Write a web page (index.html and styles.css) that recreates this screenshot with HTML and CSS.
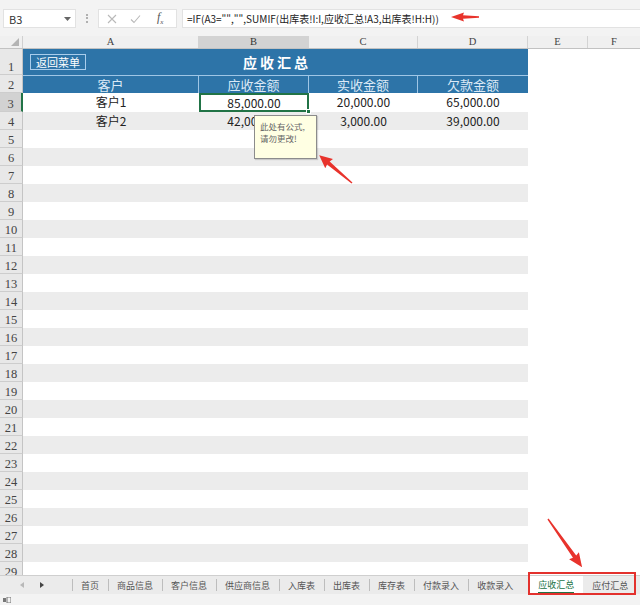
FILE: index.html
```html
<!DOCTYPE html>
<html lang="zh-CN">
<head>
<meta charset="utf-8">
<title>应收汇总</title>
<link rel="stylesheet" href="styles.css">
</head>
<body>
<div class="app">
  <div class="fbar">
    <div class="namebox"><span>B3</span><svg class="dd" width="7" height="4" viewBox="0 0 7 4"><path d="M0 0h7L3.5 4z" fill="#666"/></svg></div>
    <div class="vdots"></div>
    <div class="fxbox">
      <svg class="ic-x" width="10" height="10" viewBox="0 0 10 10"><path d="M1 1l8 8M9 1l-8 8" stroke="#b9b9b9" stroke-width="1.1"/></svg>
      <svg class="ic-ok" width="11" height="10" viewBox="0 0 11 10"><path d="M1 5.5l3 3 6-7" stroke="#b9b9b9" stroke-width="1.1" fill="none"/></svg>
      <span class="fx">f<sub>x</sub></span>
    </div>
    <div class="formula">=IF(A3="","",SUMIF(出库表!I:I,应收汇总!A3,出库表!H:H))</div>
  </div>

  <div class="sheet">
    <div class="colhdr">
      <div class="corner"><svg width="8" height="8" viewBox="0 0 8 8"><path d="M8 0V8H0z" fill="#b4b4b4"/></svg></div>
      <div class="ch ca">A</div>
      <div class="ch cb sel">B</div>
      <div class="ch cc">C</div>
      <div class="ch cd">D</div>
      <div class="ch ce">E</div>
      <div class="ch cf">F</div>
    </div>

    <div class="row r1">
      <div class="rh">1</div>
      <div class="titlebar">
        <span class="btn">返回菜单</span>
        <span class="title">应收汇总</span>
        <span></span>
      </div>
      <div class="rest"></div>
    </div>

    <div class="row r2">
      <div class="rh">2</div>
      <div class="hc ca">客户</div>
      <div class="hc cb">应收金额</div>
      <div class="hc cc">实收金额</div>
      <div class="hc cd last">欠款金额</div>
      <div class="rest"></div>
    </div>

    <div class="row r3">
      <div class="rh selrow">3</div>
      <div class="c ca">客户1</div>
      <div class="c cb active">85,000.00<span class="handle"></span></div>
      <div class="c cc">20,000.00</div>
      <div class="c cd">65,000.00</div>
      <div class="rest"></div>
    </div>

    <div class="row even">
      <div class="rh">4</div>
      <div class="c ca">客户2</div>
      <div class="c cb">42,000.00</div>
      <div class="c cc">3,000.00</div>
      <div class="c cd">39,000.00</div>
      <div class="rest"></div>
    </div>

    <div class="row"><div class="rh">5</div><div class="band"></div><div class="rest"></div></div>
    <div class="row even"><div class="rh">6</div><div class="band"></div><div class="rest"></div></div>
    <div class="row"><div class="rh">7</div><div class="band"></div><div class="rest"></div></div>
    <div class="row even"><div class="rh">8</div><div class="band"></div><div class="rest"></div></div>
    <div class="row"><div class="rh">9</div><div class="band"></div><div class="rest"></div></div>
    <div class="row even"><div class="rh">10</div><div class="band"></div><div class="rest"></div></div>
    <div class="row"><div class="rh">11</div><div class="band"></div><div class="rest"></div></div>
    <div class="row even"><div class="rh">12</div><div class="band"></div><div class="rest"></div></div>
    <div class="row"><div class="rh">13</div><div class="band"></div><div class="rest"></div></div>
    <div class="row even"><div class="rh">14</div><div class="band"></div><div class="rest"></div></div>
    <div class="row"><div class="rh">15</div><div class="band"></div><div class="rest"></div></div>
    <div class="row even"><div class="rh">16</div><div class="band"></div><div class="rest"></div></div>
    <div class="row"><div class="rh">17</div><div class="band"></div><div class="rest"></div></div>
    <div class="row even"><div class="rh">18</div><div class="band"></div><div class="rest"></div></div>
    <div class="row"><div class="rh">19</div><div class="band"></div><div class="rest"></div></div>
    <div class="row even"><div class="rh">20</div><div class="band"></div><div class="rest"></div></div>
    <div class="row"><div class="rh">21</div><div class="band"></div><div class="rest"></div></div>
    <div class="row even"><div class="rh">22</div><div class="band"></div><div class="rest"></div></div>
    <div class="row"><div class="rh">23</div><div class="band"></div><div class="rest"></div></div>
    <div class="row even"><div class="rh">24</div><div class="band"></div><div class="rest"></div></div>
    <div class="row"><div class="rh">25</div><div class="band"></div><div class="rest"></div></div>
    <div class="row even"><div class="rh">26</div><div class="band"></div><div class="rest"></div></div>
    <div class="row"><div class="rh">27</div><div class="band"></div><div class="rest"></div></div>
    <div class="row even"><div class="rh">28</div><div class="band"></div><div class="rest"></div></div>
    <div class="row"><div class="rh">29</div><div class="band"></div><div class="rest"></div></div>
  </div>

  <div class="tabs">
    <div class="nav">
      <svg width="4" height="6" viewBox="0 0 4 6"><path d="M4 0V6L0 3z" fill="#b8b8b8"/></svg>
      <svg width="4" height="6" viewBox="0 0 4 6"><path d="M0 0V6L4 3z" fill="#444"/></svg>
    </div>
    <div class="tab">首页</div>
    <div class="tab">商品信息</div>
    <div class="tab">客户信息</div>
    <div class="tab">供应商信息</div>
    <div class="tab">入库表</div>
    <div class="tab">出库表</div>
    <div class="tab">库存表</div>
    <div class="tab">付款录入</div>
    <div class="tab">收款录入</div>
    <div class="tab current"><span>应收汇总</span></div>
    <div class="tab nosep">应付汇总</div>
  </div>
  <div class="status">
    <svg width="8" height="6" viewBox="0 0 8 6"><rect x="0" y="1" width="3" height="4" fill="#777"/><rect x="4" y="0" width="4" height="6" fill="none" stroke="#777" stroke-width="1"/></svg>
  </div>

  <div class="tip">此处有公式,<br>请勿更改!</div>
  <div class="redbox"></div>
  <svg class="arrows" width="640" height="605" viewBox="0 0 640 605">
    <g fill="#e8332c">
      <polygon transform="translate(479,17) rotate(180)" points="0,-0.7 16,-1.7 15,-4.5 28,0 15,4.5 16,1.7 0,0.7"/>
      <polygon transform="translate(352,183) rotate(220.3)" points="0,-0.7 31,-2 30,-6 43,0 30,6 31,2 0,0.7"/>
      <polygon transform="translate(548,519) rotate(54.7)" points="0,-0.7 46,-2 45,-6 59,0 45,6 46,2 0,0.7"/>
    </g>
  </svg>
</div>
</body>
</html>
```

FILE: styles.css
```css
* { box-sizing: border-box; margin: 0; padding: 0; }
body { margin: 0; background: #fff; }

.app {
  position: relative;
  width: 640px;
  height: 605px;
  overflow: hidden;
  display: flex;
  flex-direction: column;
  background: #fff;
  font-family: "Noto Sans CJK SC", "Noto Sans", sans-serif;
  color: #222;
}

/* formula bar */
.fbar {
  height: 36px;
  flex: none;
  display: flex;
  align-items: flex-start;
  padding: 9px 0 0 3px;
  background: #f3f3f3;
}
.namebox {
  width: 73px;
  height: 19px;
  background: #fff;
  border: 1px solid #e2e2e2;
  display: flex;
  align-items: center;
  justify-content: space-between;
  padding: 0 4px 0 5px;
  font-size: 11px;
  color: #333;
}
.vdots {
  width: 2px;
  height: 9px;
  margin: 5px 10px 0 10px;
  border-left: 2px dotted #b0b0b0;
}
.fxbox {
  width: 79px;
  height: 19px;
  background: #fff;
  border: 1px solid #e2e2e2;
  display: flex;
  align-items: center;
}
.ic-x { margin-left: 8px; }
.ic-ok { margin-left: 13px; }
.fx {
  margin-left: 16px;
  font-family: "Liberation Serif", serif;
  font-style: italic;
  font-size: 12px;
  color: #555;
  line-height: 1;
}
.fx sub { font-size: 7px; }
.formula {
  flex: 1;
  height: 19px;
  margin-left: 5px;
  background: #fff;
  border: 1px solid #e2e2e2;
  border-right: none;
  padding-left: 4px;
  font-size: 10px;
  line-height: 17px;
  color: #222;
  white-space: nowrap;
}

/* sheet */
.sheet {
  flex: 1;
  overflow: hidden;
  display: flex;
  flex-direction: column;
}
.colhdr {
  height: 13px;
  flex: none;
  display: flex;
  background: #f0f0f0;
  border-bottom: 1px solid #c2c2c2;
}
.corner {
  width: 23px;
  flex: none;
  display: flex;
  justify-content: flex-end;
  align-items: flex-end;
  padding: 0 3px 2px 0;
  border-right: 1px solid #d0d0d0;
}
.ch {
  flex: none;
  font-family: "Liberation Serif", serif;
  font-size: 10.5px;
  line-height: 12px;
  color: #444;
  text-align: center;
  border-right: 1px solid #d3d3d3;
}
.ch.sel { background: #d3d3d3; color: #333; }
.ca { width: 176px; flex: none; }
.cb { width: 110px; flex: none; }
.cc { width: 109px; flex: none; }
.cd { width: 110px; flex: none; }
.ce { width: 60px; flex: none; }
.cf { width: 52px; flex: none; border-right: none; }

.row {
  height: 18px;
  flex: none;
  display: flex;
}
.row.r1 { height: 26px; }
.row.r3 { height: 19px; }
.rh {
  width: 23px;
  flex: none;
  display: flex;
  align-items: flex-end;
  justify-content: center;
  padding-bottom: 1px;
  background: #e8e8e8;
  border-right: 1px solid #c4c4c4;
  border-bottom: 1px solid #cdcdcd;
  font-family: "Liberation Serif", serif;
  font-size: 12.5px;
  line-height: 1;
  color: #444;
}
.rh.selrow {
  background: #d2d2d2;
  border-right: 2px solid #217346;
}
.rest { flex: 1; background: #fff; }
.band { width: 505px; flex: none; background: #fff; }
.row.even .band,
.row.even .c { background: #ececec; }

/* title row */
.titlebar {
  width: 505px;
  flex: none;
  display: grid;
  grid-template-columns: 1fr auto 1fr;
  align-items: center;
  background: #2d74a8;
}
.btn {
  justify-self: start;
  margin-left: 7px;
  height: 16px;
  padding: 0 5px;
  border: 1px solid #a9cdec;
  color: #fff;
  font-size: 11px;
  line-height: 14px;
}
.title {
  color: #fff;
  font-size: 14px;
  font-weight: bold;
  letter-spacing: 3px;
  padding-left: 3px;
}

/* header row */
.hc {
  background: #2d74a8;
  color: #dbe9f6;
  font-size: 13px;
  line-height: 17px;
  text-align: center;
  border-top: 1px solid #9fc6e6;
  border-right: 1px solid #9fc6e6;
}
.hc.last { border-right: none; }

/* data cells */
.c {
  background: #fff;
  font-size: 12px;
  line-height: 18px;
  text-align: center;
  color: #222;
  white-space: nowrap;
}
.c.active {
  position: relative;
  border: 2px solid #217346;
  line-height: 15px;
}
.handle {
  position: absolute;
  right: -4px;
  bottom: -4px;
  width: 5px;
  height: 5px;
  background: #217346;
  border: 1px solid #fff;
}

/* sheet tabs */
.tabs {
  height: 19px;
  flex: none;
  display: flex;
  align-items: stretch;
  background: #ebebeb;
  border-top: 1px solid #cfcfcf;
}
.nav {
  width: 72px;
  flex: none;
  display: flex;
  align-items: center;
  gap: 16px;
  padding-left: 20px;
}
.tab {
  flex: none;
  display: flex;
  align-items: center;
  padding: 0 9px;
  font-size: 9px;
  color: #555;
  background: linear-gradient(#bdbdbd, #bdbdbd) left center / 1px 12px no-repeat;
}
.tab.current {
  margin-left: 7px;
  background: #fff;
  color: #217346;
}
.tab.current span {
  border-bottom: 2px solid #217346;
  line-height: 14px;
  margin-top: 2px;
}
.tab.nosep { background: none; }
.status {
  height: 11px;
  flex: none;
  background: #f3f3f3;
  display: flex;
  align-items: center;
  padding-left: 3px;
}

/* overlays */
.tip {
  position: absolute;
  left: 254px;
  top: 115px;
  width: 63px;
  height: 44px;
  padding: 4px 0 0 5px;
  background: #ffffe3;
  border: 1px solid #8c8c8c;
  box-shadow: 1px 1px 1px rgba(0,0,0,0.15);
  font-size: 8.5px;
  line-height: 12px;
  color: #666;
  white-space: nowrap;
}
.redbox {
  position: absolute;
  left: 528px;
  top: 572px;
  width: 108px;
  height: 23px;
  border: 2px solid #e3312d;
}
.arrows {
  position: absolute;
  left: 0;
  top: 0;
  pointer-events: none;
}
```
